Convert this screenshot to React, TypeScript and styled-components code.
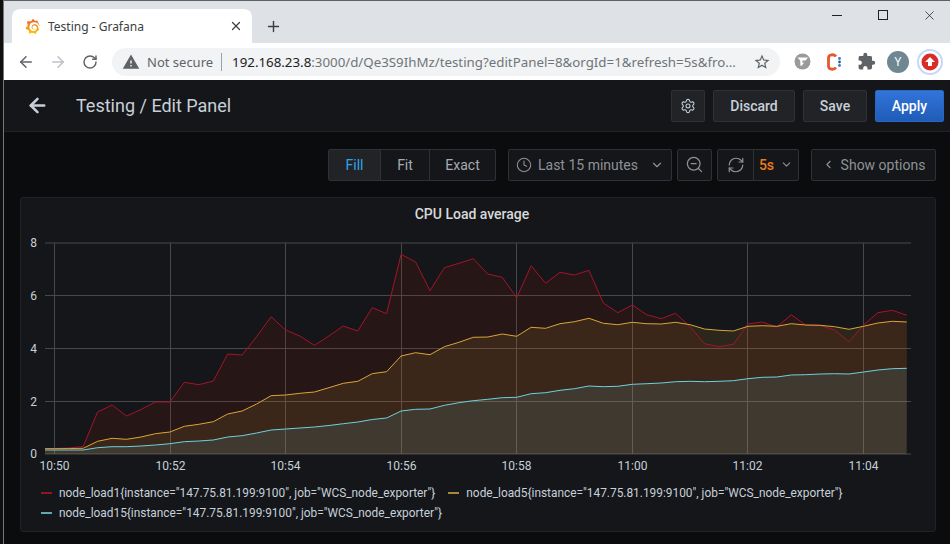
import styled, { createGlobalStyle } from "styled-components"
import { ArrowLeft, ArrowRight, ChevronDown, ChevronLeft, Clock, Plus, RefreshCw, RotateCw, Settings, X, ZoomOut } from "lucide-react"
import { MdExtension, MdStarBorder, MdWarning } from "react-icons/md"
import { SiGrafana } from "react-icons/si"

const GlobalStyle = createGlobalStyle`
    html, body {
        margin: 0;
        padding: 0;
        background: #0b0c0e;
    }
    * {
        box-sizing: border-box;
    }
`

const Page = styled.div`
    width: 950px;
    height: 544px;
    overflow: hidden;
    display: flex;
    padding-left: 3px;
    background: #101010;
`

const Browser = styled.div`
    flex: 1;
    min-width: 0;
    display: flex;
    flex-direction: column;
    border-left: 1px solid #77787a;
    border-top: 1px solid #5f6062;
`

const TabStrip = styled.div`
    height: 42px;
    flex: none;
    display: flex;
    align-items: flex-end;
    padding-left: 8px;
    background: #dee1e6;
`

const Tab = styled.div`
    width: 240px;
    height: 34px;
    display: flex;
    align-items: center;
    padding: 0 9px 0 13px;
    background: #ffffff;
    border-radius: 8px 8px 0 0;
    color: #3c4043;
    font: 12px "Noto Sans", sans-serif;
    .title {
        margin-left: 8px;
        flex: 1;
    }
`

const Favicon = styled(SiGrafana)`
    width: 15px;
    height: 15px;
    fill: url(#grafanaFlame);
`

const NewTab = styled.div`
    height: 34px;
    margin-left: 13px;
    display: flex;
    align-items: center;
    color: #3c4043;
`

const WindowButtons = styled.div`
    margin: 0 -2px 0 auto;
    align-self: flex-start;
    height: 28px;
    display: flex;
    color: #202124;
`

const WindowButton = styled.div`
    width: 46px;
    height: 28px;
    display: flex;
    align-items: center;
    justify-content: center;
    .min {
        width: 10px;
        height: 1px;
        background: #202124;
    }
    .max {
        width: 10px;
        height: 10px;
        border: 1px solid #202124;
    }
`

const Toolbar = styled.div`
    height: 37px;
    flex: none;
    display: flex;
    align-items: center;
    background: #ffffff;
    color: #5f6368;
    padding-left: 6px;
`

const NavIcon = styled.div<{ $dim?: boolean }>`
    width: 32px;
    height: 28px;
    display: flex;
    align-items: center;
    justify-content: center;
    color: ${p => p.$dim ? "#bdc1c6" : "#5f6368"};
`

const Omnibox = styled.div`
    width: 668px;
    flex: none;
    height: 28px;
    margin-left: 6px;
    display: flex;
    align-items: center;
    padding: 0 9px 0 10px;
    background: #f1f3f4;
    border-radius: 14px;
    font: 14px "Noto Sans", sans-serif;
    white-space: nowrap;
    .secure {
        margin-left: 7px;
        font-size: 13px;
    }
    .divider {
        width: 1px;
        height: 18px;
        margin: 0 10px 0 8px;
        background: #9aa0a6;
    }
    .url {
        flex: 1;
        font-size: 13.3px;
        color: #70757a;
        b {
            font-weight: 400;
            color: #202124;
        }
    }
`

const Extensions = styled.div`
    display: flex;
    flex: none;
    align-items: center;
    margin-left: 6px;
`

const ExtSlot = styled.div`
    width: 32px;
    height: 32px;
    display: flex;
    align-items: center;
    justify-content: center;
`

const Avatar = styled.div`
    width: 22px;
    height: 22px;
    border-radius: 50%;
    background: #6f8793;
    color: #ffffff;
    font: 12px "Noto Sans", sans-serif;
    display: flex;
    align-items: center;
    justify-content: center;
`

const UpdateRing = styled.div`
    width: 26px;
    height: 26px;
    border-radius: 50%;
    border: 2px solid #c5d8f7;
    display: flex;
    align-items: center;
    justify-content: center;
`

const Grafana = styled.div`
    flex: 1;
    min-height: 0;
    display: flex;
    flex-direction: column;
    background: #0b0c0e;
    font-family: Roboto, sans-serif;
`

const PageHeader = styled.div`
    height: 52px;
    flex: none;
    display: flex;
    align-items: center;
    padding: 0 6px 0 22px;
    background: #141619;
    border-bottom: 1px solid #202226;
    color: #c7d0d9;
    .back {
        display: flex;
    }
    .title {
        margin-left: 27px;
        flex: 1;
        font-size: 18px;
    }
`

const HeaderActions = styled.div`
    display: flex;
    gap: 8px;
`

const HeaderButton = styled.div<{ $primary?: boolean; $w: number }>`
    width: ${p => p.$w}px;
    height: 32px;
    display: flex;
    align-items: center;
    justify-content: center;
    border-radius: 2px;
    font-size: 14px;
    font-weight: 500;
    color: ${p => p.$primary ? "#ffffff" : "#c7d0d9"};
    border: 1px solid ${p => p.$primary ? "#2c66c4" : "#2c3235"};
    background: ${p => p.$primary ? "linear-gradient(#3274d9, #1f5cb8)" : "#212327"};
`

const Controls = styled.div`
    height: 32px;
    flex: none;
    margin: 17px 14px 16px 0;
    display: flex;
    justify-content: flex-end;
    color: #8e9297;
    font-size: 14px;
`

const Group = styled.div<{ $ml: number }>`
    margin-left: ${p => p.$ml}px;
    display: flex;
    border: 1px solid #2c3235;
    border-radius: 2px;
    background: #141619;
`

const Cell = styled.div<{ $w: number; $active?: boolean; $bar?: boolean; $bright?: boolean }>`
    width: ${p => p.$w}px;
    padding-bottom: 1px;
    display: flex;
    align-items: center;
    justify-content: center;
    gap: 6px;
    color: ${p => p.$active ? "#33a2e5" : p.$bright ? "#a6abb1" : "inherit"};
    background: ${p => p.$active ? "#212327" : "transparent"};
    border-left: ${p => p.$bar ? "1px solid #2c3235" : "none"};
    .orange {
        color: #eb7b18;
        font-weight: 500;
    }
    .caret {
        margin-left: 6px;
    }
`

const Panel = styled.div`
    flex: none;
    height: 335px;
    margin: 0 14px 0 16px;
    background: #141619;
    border: 1px solid #202226;
    border-radius: 3px;
    color: #c7d0d9;
`

const PanelTitle = styled.div`
    height: 34px;
    padding: 0 12px 2px 0;
    display: flex;
    align-items: center;
    justify-content: center;
    font-size: 14px;
    font-weight: 500;
    color: #d8d9da;
`

const Chart = styled.svg`
    display: block;
    font-family: Roboto, sans-serif;
    font-size: 12px;
    .tick {
        fill: #c7d0d9;
    }
`

const Legend = styled.div`
    display: flex;
    flex-wrap: wrap;
    padding: 5px 0 0 20px;
`

const LegendItem = styled.div`
    height: 20px;
    display: flex;
    align-items: center;
    margin-right: 13px;
    font-size: 11.88px;
    color: #c7d0d9;
    white-space: nowrap;
`

const Swatch = styled.i<{ $color: string }>`
    width: 11px;
    height: 2px;
    margin-right: 7px;
    background: ${p => p.$color};
`

const red = [448.5, 448, 446.5, 412, 405, 416, 409.5, 402, 402, 382.3, 384.7, 381, 354, 355, 336.7, 316.7, 330, 336, 345.3, 336, 326, 331, 307.7, 313.7, 254.3, 262, 290.7, 267.7, 263.3, 258.7, 274, 277.3, 297.7, 265.7, 283.3, 272.3, 275, 270.3, 303, 312.7, 305, 314.7, 318.7, 313.3, 326.7, 343.7, 346.7, 344.3, 324, 322, 327, 314.7, 325, 325.3, 330, 341.7, 325, 312.7, 310.3, 315.3]
const yellow = [448.7, 448.6, 448.3, 441.3, 438.3, 439.3, 437, 433.7, 432, 426.3, 424.3, 421.7, 414, 411, 404, 395.7, 395, 393.3, 392, 387.7, 383.3, 381.3, 373.7, 371.7, 356, 352.7, 354.7, 346.7, 342.3, 337.3, 337, 334, 336.3, 327.3, 328.3, 323.7, 321.7, 318.3, 323.3, 324.7, 322.3, 323.7, 324, 322.3, 324.7, 329, 330.3, 331, 326.3, 325.7, 326.3, 323.7, 325, 325.3, 326.7, 329.3, 326.3, 323, 321.3, 322]
const cyan = [450, 450, 450, 447.7, 446.7, 446.7, 446, 445, 443.7, 441.7, 441, 440, 437, 435.7, 433, 430, 429, 428, 427, 425.5, 423.7, 422, 419.5, 418, 411, 409.3, 409, 405.3, 402.7, 400.7, 399.3, 397.7, 397.3, 393.7, 392.7, 390.3, 388.7, 386, 386.7, 386.3, 384.3, 383.7, 383, 381.7, 381.3, 381.7, 381.3, 380.7, 378.7, 377.3, 377, 375, 374.7, 374, 373.7, 374, 372, 370, 368.7, 368.3]

const series = [
    { color: "#a5142a", fill: "#bf1b00", data: red, label: 'node_load1{instance="147.75.81.199:9100", job="WCS_node_exporter"}', swatch: "#8f1527" },
    { color: "#d9a53a", fill: "#eab839", data: yellow, label: 'node_load5{instance="147.75.81.199:9100", job="WCS_node_exporter"}', swatch: "#a8873a" },
    { color: "#6ed0e0", fill: "#6ed0e0", data: cyan, label: 'node_load15{instance="147.75.81.199:9100", job="WCS_node_exporter"}', swatch: "#62a8b4" },
]

const xAt = (i: number) => 54.3 + i * 14.45
const linePoints = (data: number[]) => `45,${data[0]} ` + data.map((y, i) => `${xAt(i).toFixed(1)},${y}`).join(" ")

const yTicks = [{ y: 243, t: "8" }, { y: 295.5, t: "6" }, { y: 348.5, t: "4" }, { y: 401.5, t: "2" }, { y: 454, t: "0" }]
const xTicks = [{ x: 54.5, t: "10:50" }, { x: 170.5, t: "10:52" }, { x: 285.5, t: "10:54" }, { x: 401.5, t: "10:56" }, { x: 516.5, t: "10:58" }, { x: 632.5, t: "11:00" }, { x: 747.5, t: "11:02" }, { x: 863.5, t: "11:04" }]

function LoadChart() {
    return <Chart width={914} height={246} viewBox="21 232 914 246">
        {xTicks.map(k => <line key={k.t} x1={k.x} x2={k.x} y1={243} y2={454} stroke="#47484a" />)}
        {yTicks.map(k => <line key={k.t} x1={45} x2={911} y1={k.y} y2={k.y} stroke="#47484a" />)}
        {series.map(s => <polygon key={s.color} points={`45,454 ${linePoints(s.data)} 906.7,454`} fill={s.fill} fillOpacity={0.11} />)}
        {series.map(s => <polyline key={s.color} points={linePoints(s.data)} fill="none" stroke={s.color} strokeWidth={1} strokeLinejoin="round" />)}
        {yTicks.map(k => <text key={k.t} className="tick" x={37} y={k.y + 4} textAnchor="end">{k.t}</text>)}
        {xTicks.map(k => <text key={k.t} className="tick" x={k.x} y={470} textAnchor="middle">{k.t}</text>)}
    </Chart>
}

export default function App() {
    return <Page>
        <GlobalStyle />
        <svg width="0" height="0" style={{ position: "absolute" }}>
            <defs>
                <linearGradient id="grafanaFlame" x1="0" y1="0" x2="0" y2="1">
                    <stop offset="0" stopColor="#f05a28" />
                    <stop offset="1" stopColor="#fbca0a" />
                </linearGradient>
            </defs>
        </svg>
        <Browser>
            <TabStrip>
                <Tab>
                    <Favicon />
                    <span className="title">Testing - Grafana</span>
                    <X size={14} strokeWidth={2.2} color="#3c4043" />
                </Tab>
                <NewTab><Plus size={17} strokeWidth={2} /></NewTab>
                <WindowButtons>
                    <WindowButton><div className="min" /></WindowButton>
                    <WindowButton><div className="max" /></WindowButton>
                    <WindowButton><X size={15} strokeWidth={1.2} /></WindowButton>
                </WindowButtons>
            </TabStrip>
            <Toolbar>
                <NavIcon><ArrowLeft size={18} strokeWidth={2} /></NavIcon>
                <NavIcon $dim><ArrowRight size={18} strokeWidth={2} /></NavIcon>
                <NavIcon><RotateCw size={16} strokeWidth={2.2} /></NavIcon>
                <Omnibox>
                    <MdWarning size={18} />
                    <span className="secure">Not secure</span>
                    <span className="divider" />
                    <span className="url"><b>192.168.23.8</b>:3000/d/Qe3S9IhMz/testing?editPanel=8&amp;orgId=1&amp;refresh=5s&amp;fro...</span>
                    <MdStarBorder size={18} color="#5f6368" />
                </Omnibox>
                <Extensions>
                    <ExtSlot>
                        <svg width="17" height="17" viewBox="0 0 17 17">
                            <circle cx="8.5" cy="8.5" r="8" fill="#9a9a9a" />
                            <path d="M3.5 4.5 L14 4.5 L11.5 7.5 L8.5 7.5 L8 9.5 L10 9.5 L8 12.5 L6.5 13 L6.2 7.5 Z" fill="#ffffff" />
                        </svg>
                    </ExtSlot>
                    <ExtSlot>
                        <svg width="16" height="18" viewBox="0 0 16 18">
                            <path d="M10 3.5 C8 1 2.5 1 2.5 5 L2.5 13 C2.5 17 8 17 10 14.5" fill="none" stroke="#e8562e" strokeWidth="2.8" />
                            <circle cx="13.5" cy="5.5" r="1.4" fill="#3b78c9" />
                            <circle cx="13.5" cy="9" r="1.4" fill="#2c5f9e" />
                            <circle cx="13.5" cy="12.5" r="1.4" fill="#3b78c9" />
                        </svg>
                    </ExtSlot>
                    <ExtSlot><MdExtension size={19} color="#5f6368" /></ExtSlot>
                    <ExtSlot><Avatar>Y</Avatar></ExtSlot>
                    <ExtSlot>
                        <UpdateRing>
                            <svg width="18" height="18" viewBox="0 0 18 18">
                                <circle cx="9" cy="9" r="8.5" fill="#d92b27" />
                                <path d="M9 4 L14 9 L11 9 L11 13 L7 13 L7 9 L4 9 Z" fill="#ffffff" />
                            </svg>
                        </UpdateRing>
                    </ExtSlot>
                </Extensions>
            </Toolbar>
            <Grafana>
                <PageHeader>
                    <span className="back"><ArrowLeft size={23} strokeWidth={2.6} /></span>
                    <span className="title">Testing / Edit Panel</span>
                    <HeaderActions>
                        <HeaderButton $w={34}><Settings size={16} strokeWidth={1.6} /></HeaderButton>
                        <HeaderButton $w={82}>Discard</HeaderButton>
                        <HeaderButton $w={64}>Save</HeaderButton>
                        <HeaderButton $w={69} $primary>Apply</HeaderButton>
                    </HeaderActions>
                </PageHeader>
                <Controls>
                    <Group $ml={0}>
                        <Cell $w={51} $active>Fill</Cell>
                        <Cell $w={49} $bar $bright>Fit</Cell>
                        <Cell $w={66} $bar $bright>Exact</Cell>
                    </Group>
                    <Group $ml={12}>
                        <Cell $w={162}>
                            <Clock size={16} strokeWidth={1.6} />
                            Last 15 minutes
                            <ChevronDown size={14} className="caret" />
                        </Cell>
                    </Group>
                    <Group $ml={5}>
                        <Cell $w={33}><ZoomOut size={19} strokeWidth={1.6} /></Cell>
                    </Group>
                    <Group $ml={5}>
                        <Cell $w={35}><RefreshCw size={18} strokeWidth={1.6} /></Cell>
                        <Cell $w={45} $bar><span className="orange">5s</span><ChevronDown size={13} /></Cell>
                    </Group>
                    <Group $ml={12}>
                        <Cell $w={123}><ChevronLeft size={13} />Show options</Cell>
                    </Group>
                </Controls>
                <Panel>
                    <PanelTitle>CPU Load average</PanelTitle>
                    <LoadChart />
                    <Legend>
                        {series.map(s => <LegendItem key={s.color}>
                            <Swatch $color={s.swatch} />
                            {s.label}
                        </LegendItem>)}
                    </Legend>
                </Panel>
            </Grafana>
        </Browser>
    </Page>
}
